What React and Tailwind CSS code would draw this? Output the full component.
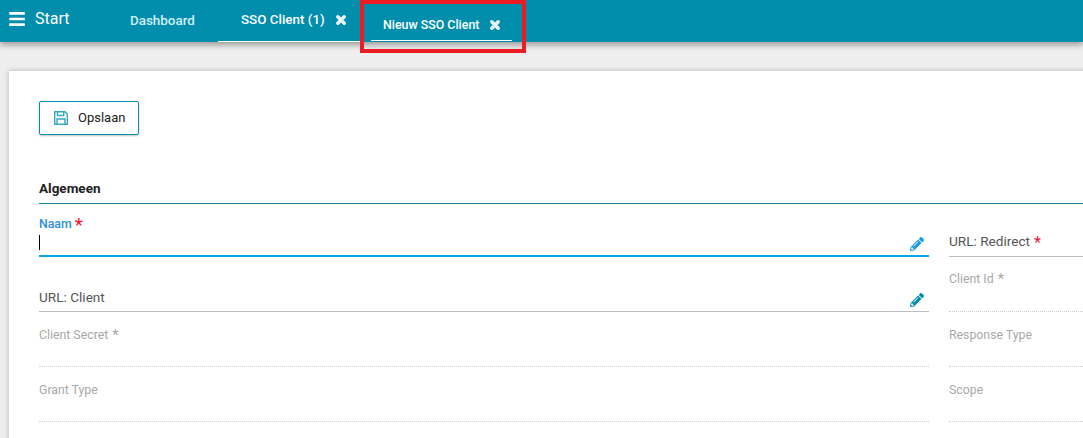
import { FaBars, FaPencilAlt } from 'react-icons/fa';

function Cross({ className }) {
  return (
    <svg viewBox="0 0 12 12" className={className}>
      <path d="M2.8 2.8l6.4 6.4M9.2 2.8l-6.4 6.4" stroke="currentColor" strokeWidth="3.6" strokeLinecap="round" />
    </svg>
  );
}

function SaveIcon({ className }) {
  return (
    <svg viewBox="0 0 14 14" fill="none" stroke="currentColor" strokeWidth="1.4" className={className}>
      <path d="M.7.7h10.2l2.4 2.4v10.2H.7z" />
      <path d="M3.5.7v3.8h6.2V.7" />
      <path d="M3 13.3V8h8v5.3" />
    </svg>
  );
}

function Tab({ label, closable, active }) {
  return (
    <div className={`flex items-center h-[42px] ${closable ? 'border-b border-white' : 'w-[88px] text-[#d5eef3]'} ${active ? 'w-[141px] pl-[12px] text-white mt-[-1px]' : closable ? 'w-[142px] pl-[23px]' : ''}`}>
      <span className={`font-medium ${active ? 'text-[12.4px] pt-[11px]' : 'text-[13.4px]'}`}>{label}</span>
      {closable && <Cross className={`ml-[10px] w-[12px] h-[12px] text-[#e6f4f7] ${active ? 'mt-[10px]' : 'mb-[2px]'}`} />}
    </div>
  );
}

function Field({ label, required, state, filled, icon, iconColor, labelTop, children }) {
  const line =
    state === 'focus'
      ? 'border-b-2 border-[#0ea5e3]'
      : filled
      ? 'border-b border-[#bdbdbd]'
      : 'border-b border-dotted border-[#cfcfcf]';
  return (
    <div className={`relative h-[55px] ${line}`}>
      {children}
      {filled ? (
        <div className={`absolute left-0 ${labelTop || 'top-[31px]'} text-[13.6px] leading-[16px] text-[#555]`}>
          {label}
          {required && <span className="ml-1 align-[-2px] text-[16px] leading-[12px] text-[#f0143c]">*</span>}
        </div>
      ) : (
        <div className={`absolute left-0 ${labelTop || 'top-[15px]'} text-[12.3px] leading-[16px] text-[#a8a8a8]`}>
          {label}
          {required && <span className="ml-1 align-[-1px] text-[15px] leading-[12px]">*</span>}
        </div>
      )}
      {icon && <FaPencilAlt className={`absolute right-[5px] bottom-[4px] w-[14px] h-[14px] ${iconColor}`} />}
    </div>
  );
}

export default function App() {
  return (
    <div className="relative w-[1083px] h-[438px] overflow-hidden bg-[#eeeeee] font-['Roboto',sans-serif]">
      <header className="relative flex h-[42px] bg-[#008eac] text-white shadow-[0_3px_6px_rgba(0,0,0,0.35)]">
        <div className="flex items-center w-[130px] pl-[9px] pb-[4px]">
          <FaBars className="w-[16px] h-[18px]" />
          <span className="ml-[10px] text-[16px]">Start</span>
        </div>
        <Tab label="Dashboard" />
        <Tab label="SSO Client (1)" closable />
        <div className="w-[11px]" />
        <Tab label="Nieuw SSO Client" closable active />
      </header>

      {/* markering rond actieve tab */}
      <div className="absolute left-[360px] top-0 w-[166px] h-[53px] border-4 border-[#ed1c24]" />

      <main className="mt-[29px] ml-[9px] w-[1200px] h-[400px] bg-white pl-[30px] pt-[30px] shadow-[0_0_5px_rgba(0,0,0,0.25)]">
        <button className="flex items-center w-[100px] h-[34px] pl-[14px] rounded-[2px] border border-[#008eac] shadow-[0_1px_2px_rgba(0,0,0,0.25)] text-[13px] text-[#222]">
          <SaveIcon className="w-[14px] h-[14px] text-[#3aa5c0]" />
          <span className="ml-[10px]">Opslaan</span>
        </button>

        <h2 className="mt-[45px] h-[24px] border-b border-[#1a8aa5] text-[13.5px] leading-[16px] font-bold text-[#222]">Algemeen</h2>

        <div className="grid grid-cols-[890px_1fr] gap-x-[20px] mt-[-2px]">
          <Field state="focus" icon iconColor="text-[#1a9be0]">
            <div className="absolute left-0 top-[14px] text-[12.3px] leading-[16px] font-medium text-[#2a8fd8]">
              Naam <span className="align-[-3px] text-[18px] leading-[12px] text-[#f0143c]">*</span>
            </div>
            <div className="absolute left-0 top-[33px] w-px h-[15px] bg-black" />
          </Field>
          <Field label="URL: Redirect" required filled />
          <Field label="URL: Client" filled icon iconColor="text-[#008eac]" labelTop="top-[32px]" />
          <Field label="Client Id" required labelTop="top-[14px]" />
          <Field label="Client Secret" required />
          <Field label="Response Type" />
          <Field label="Grant Type" />
          <Field label="Scope" />
        </div>
      </main>
    </div>
  );
}
